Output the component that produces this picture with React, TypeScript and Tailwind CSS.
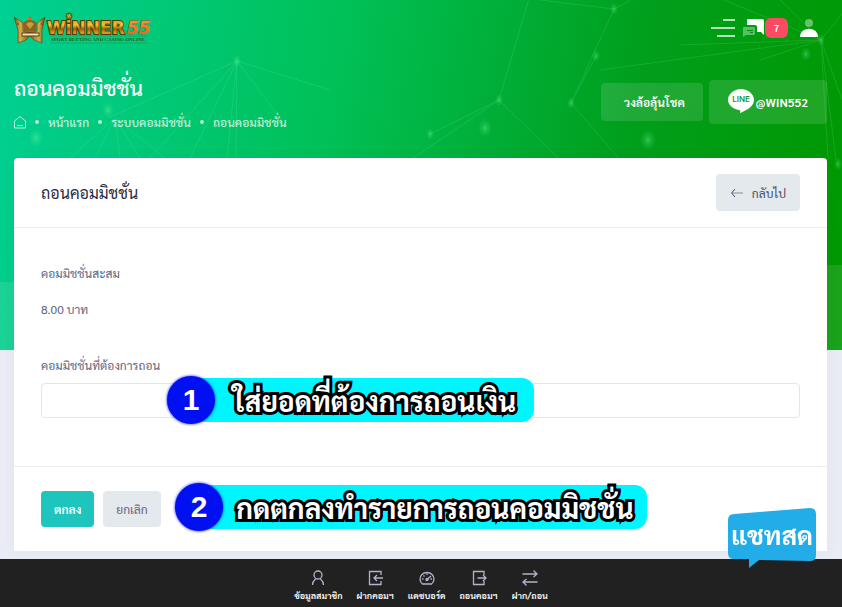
import React, { useState } from "react";

const FONT = "font-['Sarabun','Noto_Sans_Thai','Noto_Sans',sans-serif]";

const crumbs = ["หน้าแรก", "ระบบคอมมิชชั่น", "ถอนคอมมิชชั่น"];

// Points and rays of the network pattern behind the page header
const hubs = [
  { x: 237, y: 61, rays: [[108, 118], [150, 158], [190, 158], [227, 158], [236, 158], [285, 125], [330, 90]] },
  { x: 115, y: 118, rays: [[70, 158], [95, 158], [120, 158], [140, 158], [165, 158]] },
  { x: 821, y: 40, rays: [[700, -10], [770, -10], [845, 10], [842, 100], [836, 160], [828, 160], [760, 60], [680, 45], [600, 70]] },
  { x: 499, y: 100, rays: [[530, -5], [430, 134], [560, 160], [410, 160]] },
  { x: 614, y: 9, rays: [[500, -5], [571, 103], [640, -5]] },
  { x: 571, y: 103, rays: [[620, 160], [596, 56]] },
];

const dots = [
  [237, 61, 3], [108, 110, 5], [36, 138, 6], [596, 56, 3], [614, 9, 3], [571, 103, 3], [430, 134, 3],
  [499, 100, 3], [821, 40, 3], [806, 54, 4], [648, 140, 7], [485, 128, 6], [838, 164, 3],
];

function NetworkPattern() {
  return (
    <svg className="absolute inset-x-0 top-0 h-[350px] w-full" viewBox="0 0 842 350" preserveAspectRatio="none" aria-hidden="true">
      <defs>
        <radialGradient id="glow">
          <stop offset="0" stopColor="#7dffa8" stopOpacity="0.4" />
          <stop offset="0.4" stopColor="#7dffa8" stopOpacity="0.18" />
          <stop offset="1" stopColor="#7dffa8" stopOpacity="0" />
        </radialGradient>
      </defs>
      <g stroke="#b8ffd0" strokeWidth="1" opacity="0.12">
        {hubs.map((hub) =>
          hub.rays.map(([x, y]) => <line key={`${hub.x}-${x}-${y}`} x1={hub.x} y1={hub.y} x2={x} y2={y} />)
        )}
      </g>
      {dots.map(([x, y, r]) => (
        <ellipse key={`${x}-${y}`} cx={x} cy={y} rx={r + 1} ry={r + 3} fill="url(#glow)" />
      ))}
      <path d="M0 282 L842 265 V350 H0 Z" fill="#fff" opacity="0.1" />
    </svg>
  );
}

function Logo() {
  return (
    <svg width="138" height="32" viewBox="0 0 138 32" role="img" aria-label="Winner55">
      <defs>
        <linearGradient id="gold" x1="0" y1="0" x2="0" y2="1">
          <stop offset="0" stopColor="#d09018" />
          <stop offset="0.35" stopColor="#f3c634" />
          <stop offset="0.55" stopColor="#9a650c" />
          <stop offset="0.75" stopColor="#dca020" />
          <stop offset="1" stopColor="#7a4e0c" />
        </linearGradient>
        <linearGradient id="crown" x1="0" y1="0" x2="1" y2="0">
          <stop offset="0" stopColor="#6e4c14" />
          <stop offset="0.2" stopColor="#d6ae4c" />
          <stop offset="0.5" stopColor="#7a5818" />
          <stop offset="0.8" stopColor="#d6ae4c" />
          <stop offset="1" stopColor="#654410" />
        </linearGradient>
        <linearGradient id="fire" x1="0" y1="0" x2="0" y2="1">
          <stop offset="0" stopColor="#ff9a2c" />
          <stop offset="1" stopColor="#f4541c" />
        </linearGradient>
      </defs>
      <path d="M0 5 L9 11 L9 19 L12 20 L20 20 L23 19 L23 11 L31 5 L28 18 L28 31 L20 28 L16 24 L12 28 L4 31 L4 18 Z" fill="url(#crown)" stroke="#5e4312" strokeWidth="1" strokeOpacity="0.6" />
      <path d="M10 19 L9 11 Q12 8 15 8 L16 3 L17 8 Q20 8 23 11 L22 19 Z" fill="#8a6420" />
      <path d="M12 12 Q16 8 20 12 L16 17 Z" fill="#c89c3c" />
      <rect x="14" y="6" width="4" height="2" fill="#e06a20" />
      <rect x="8" y="21" width="17" height="3" fill="#efe6c0" stroke="#5e4312" />
      <circle cx="4" cy="12" r="1" fill="#d02818" />
      <circle cx="28" cy="12" r="1" fill="#d02818" />
      <text x="33" y="22" fontSize="17" fontWeight="700" fill="url(#gold)" stroke="#5a3c0c" strokeWidth="2" paintOrder="stroke" className="font-['DejaVu_Sans',sans-serif]">
        WiNNER
      </text>
      <circle cx="55" cy="4" r="3" fill="#6f8a28" stroke="#5a5414" />
      <path d="M53 3 L57 5 M54 6 L56 2" stroke="#c9b040" />
      <text x="113" y="22" fontSize="17" fontWeight="700" fontStyle="italic" fill="url(#fire)" stroke="#a8501c" strokeWidth="1" paintOrder="stroke" className="font-['DejaVu_Sans',sans-serif]">
        55
      </text>
      <path d="M36 24 H134 M36 31 H134" stroke="#1f8a3c" opacity="0.4" />
      <text x="37" y="29" fontSize="5" fontWeight="700" fill="#2a5c1c" className="font-['Liberation_Serif',serif]">
        SPORT BETTING AND CASINO ONLINE
      </text>
    </svg>
  );
}

function LineIcon() {
  return (
    <svg width="26" height="26" viewBox="0 0 26 26" aria-hidden="true">
      <path d="M13 0 C6 0 0 5 0 11 C0 16 5 20 11 21 C13 21.300 12 23 12 24 C17 22 26 18 26 11 C26 5 20 0 13 0 Z" fill="#fff" />
      <text x="13" y="13" textAnchor="middle" fontSize="8" fontWeight="600" fill="#169a2c" className="font-['Inter',sans-serif]">
        LINE
      </text>
    </svg>
  );
}

function NavIcon({ name }: { name: string }) {
  return (
    <svg width="18" height="18" viewBox="0 0 18 18" fill="none" stroke="#b3b2c8" strokeWidth="1.300" aria-hidden="true">
      {name === "user" && (
        <>
          <circle cx="9" cy="6" r="4" />
          <path d="M3.500 16 C3.500 12 6 10.500 7 9.500 M14.500 16 C14.500 12 12 10.500 11 9.500" />
        </>
      )}
      {name === "in" && <path d="M15 6 V2.500 H3.500 V15.500 H15 V12 M17 9 H8 M11 6 L8 9 L11 12" />}
      {name === "gauge" && (
        <>
          <path d="M4.500 15 A7 6.500 0 1 1 13.500 15 Z" />
          <path d="M9 10.500 L13 7 M4 10 H5.500 M5.500 6.500 L6.500 7.500 M9 4.500 V6 M12.500 10 H14" />
          <circle cx="9" cy="10.500" r="1" />
        </>
      )}
      {name === "out" && <path d="M14 6 V2.500 H3.500 V15.500 H14 V12 M7.500 9 H16 M13 6 L16 9 L13 12" />}
      {name === "swap" && <path d="M1.500 5 H16 M12.500 1.500 L16 5 L12.500 8 M16.500 13 H2 M5.500 10 L2 13 L5.500 16.500" />}
    </svg>
  );
}

const navItems = [
  { label: "ข้อมูลสมาชิก", icon: "user" },
  { label: "ฝากคอมฯ", icon: "in" },
  { label: "แดชบอร์ด", icon: "gauge" },
  { label: "ถอนคอมฯ", icon: "out" },
  { label: "ฝาก/ถอน", icon: "swap" },
];

// Numbered hint that floats over the form
function Step({ no, text, className }: { no: number; text: string; className: string }) {
  return (
    <div className={`pointer-events-none absolute flex items-center ${className}`}>
      <span className="relative z-10 flex size-12 items-center justify-center rounded-full bg-[#0010f0] font-['Liberation_Sans',sans-serif] text-3xl font-bold text-white shadow-[0_0_3px_#0010f0]">
        {no}
      </span>
      <span className="-ml-6 flex h-11 flex-1 items-center justify-center rounded-r-xl bg-[#00f6ff] pr-3 pl-9 text-[28px] font-bold whitespace-nowrap text-white [-webkit-text-stroke:6px_black] [paint-order:stroke_fill]">
        {text}
      </span>
    </div>
  );
}

export default function App() {
  const [amount, setAmount] = useState("");

  return (
    <div className={`relative flex min-h-screen flex-col bg-[#eaecf5] text-xs leading-5 text-[#62667f] ${FONT}`}>
      <div className="absolute inset-x-0 top-0 h-[350px] bg-linear-[100deg,#00d094_0%,#00c158_38%,#009f1c_72%,#009800_100%]">
        <NetworkPattern />
      </div>

      <header className="relative flex h-14 items-center justify-between pr-[15px] pl-3.5">
        <a href="#home">
          <Logo />
        </a>
        <div className="flex items-center">
          <button type="button" aria-label="เมนู">
            <svg width="24" height="20" viewBox="0 0 24 20" fill="#fff" opacity="0.7">
              <path d="M12 1h12v2H12z M0 9h24v2H0z M6 17h18v2H6z" />
            </svg>
          </button>
          <button type="button" className="ml-2 flex items-center" aria-label="ข้อความ 7">
            <svg width="22" height="20" viewBox="0 0 22 20">
              <path d="M5 1 H19 Q21 1 21 3 V17 L18 14 H14 V9 Q14 7 12 7 H4 V2 Q4 1 5 1 Z" fill="#fff" />
              <path d="M1 9 H11 Q12 9 12 10 V16 Q12 17 11 17 H3 L0 19 V10 Q0 9 1 9 Z" fill="#fff" opacity="0.35" />
              <path d="M4 12h6v1H4z M7 14h3v1H7z" fill="#0b8a20" />
            </svg>
            <span className="flex h-5 w-[23px] items-center justify-center rounded-md bg-[#fb4b62] text-[10px] font-semibold text-white">7</span>
          </button>
          <button type="button" className="mr-2 ml-3" aria-label="บัญชี">
            <svg width="19" height="20" viewBox="0 0 19 20" fill="#fff">
              <circle cx="9" cy="5" r="4" opacity="0.4" />
              <path d="M0 19 C0 8 18 8 18 19 Z" />
            </svg>
          </button>
        </div>
      </header>

      <div className="relative flex items-center justify-between pt-4 pr-[15px] pb-[26px] pl-3.5">
        <div>
          <h1 className="text-[21px] leading-8 font-medium text-white">ถอนคอมมิชชั่น</h1>
          <nav className="mt-2 flex items-center gap-[9px] font-medium text-white/75">
            <a href="#home" aria-label="หน้าแรก">
              <svg width="12" height="14" viewBox="0 0 12 14" fill="none" stroke="currentColor">
                <path d="M0.500 13 V6 L6 1.500 L11.500 6 V13 Z M3 10.500 H9" />
              </svg>
            </a>
            {crumbs.map((crumb) => (
              <React.Fragment key={crumb}>
                <span className="size-1 rounded-full bg-white/70" />
                <a href="#crumb">{crumb}</a>
              </React.Fragment>
            ))}
          </nav>
        </div>
        <div className="flex items-center gap-1.5 font-semibold text-white">
          <button type="button" className="h-[38px] rounded bg-white/12 pr-[18px] pl-[23px]">
            วงล้อลุ้นโชค
          </button>
          <a href="#line" className="flex h-11 items-center gap-0.5 rounded bg-white/12 px-[19px]">
            <LineIcon />
            @WIN552
          </a>
        </div>
      </div>

      <main className="relative mr-[15px] mb-2 ml-3.5 rounded-t bg-white shadow-[0_0_13px_rgba(82,63,105,0.05)]">
        <div className="flex items-center justify-between border-b border-[#ebedf2] px-[27px] py-4">
          <h2 className="text-base text-[#2a2b3c]">ถอนคอมมิชชั่น</h2>
          <button type="button" className="flex h-[37px] items-center gap-2 rounded bg-[#e4e9ed] px-[14px] text-[#4a4d68]">
            <svg width="14" height="14" viewBox="0 0 14 14" fill="none" stroke="currentColor">
              <path d="M5 3 L1.500 7 L5 11" />
              <path d="M2 7 H13" opacity="0.6" />
            </svg>
            กลับไป
          </button>
        </div>

        <form onSubmit={(e) => e.preventDefault()}>
          <div className="px-[27px] pt-[35px] pb-12">
            <p>คอมมิชชั่นสะสม</p>
            <p className="mt-4">8.00 บาท</p>
            <label htmlFor="amount" className="mt-9 block">
              คอมมิชชั่นที่ต้องการถอน
            </label>
            <div className="relative mt-2">
              <input
                id="amount"
                type="text"
                value={amount}
                onChange={(e) => setAmount(e.target.value)}
                className="block h-[35px] w-full rounded border border-[#e2e5ec] px-4 outline-none"
              />
              <Step no={1} text="ใส่ยอดที่ต้องการถอนเงิน" className="-top-[7px] left-[126px] w-[367px]" />
            </div>
          </div>

          <div className="relative flex gap-[9px] border-t border-[#ebedf2] px-[27px] py-6">
            <button type="submit" className="h-9 rounded bg-[#1dc5bc] px-[13px] font-semibold text-white">
              ตกลง
            </button>
            <button type="reset" onClick={() => setAmount("")} className="h-9 rounded bg-[#e4e9ed] px-[13px]">
              ยกเลิก
            </button>
            <Step no={2} text="กดตกลงทำรายการถอนคอมมิชชั่น" className="top-4 left-[161px] w-[472px]" />
          </div>
        </form>
      </main>

      <footer className="sticky bottom-0 mt-auto bg-[#212121]">
        <nav className="flex justify-center gap-3.5 pt-2.5 pb-1">
          {navItems.map((item) => (
            <a key={item.label} href={`#${item.icon}`} className="flex flex-col items-center text-[9px] leading-4 font-semibold text-white">
              <NavIcon name={item.icon} />
              {item.label}
            </a>
          ))}
        </nav>
      </footer>

      <button type="button" className="fixed right-[26px] bottom-[38px] h-[62px] w-[88px] text-[26px] font-bold text-white">
        <svg className="absolute inset-0" width="88" height="62" viewBox="0 0 88 62" aria-hidden="true">
          <path d="M6 7 L82 1 Q88 1 88 7 V48 Q88 54 82 54 L31 53 L21 61 V52 H6 Q0 52 0 46 V13 Q0 7 6 7 Z" fill="#22ade8" />
        </svg>
        <span className="relative -top-1">แชทสด</span>
      </button>
    </div>
  );
}
